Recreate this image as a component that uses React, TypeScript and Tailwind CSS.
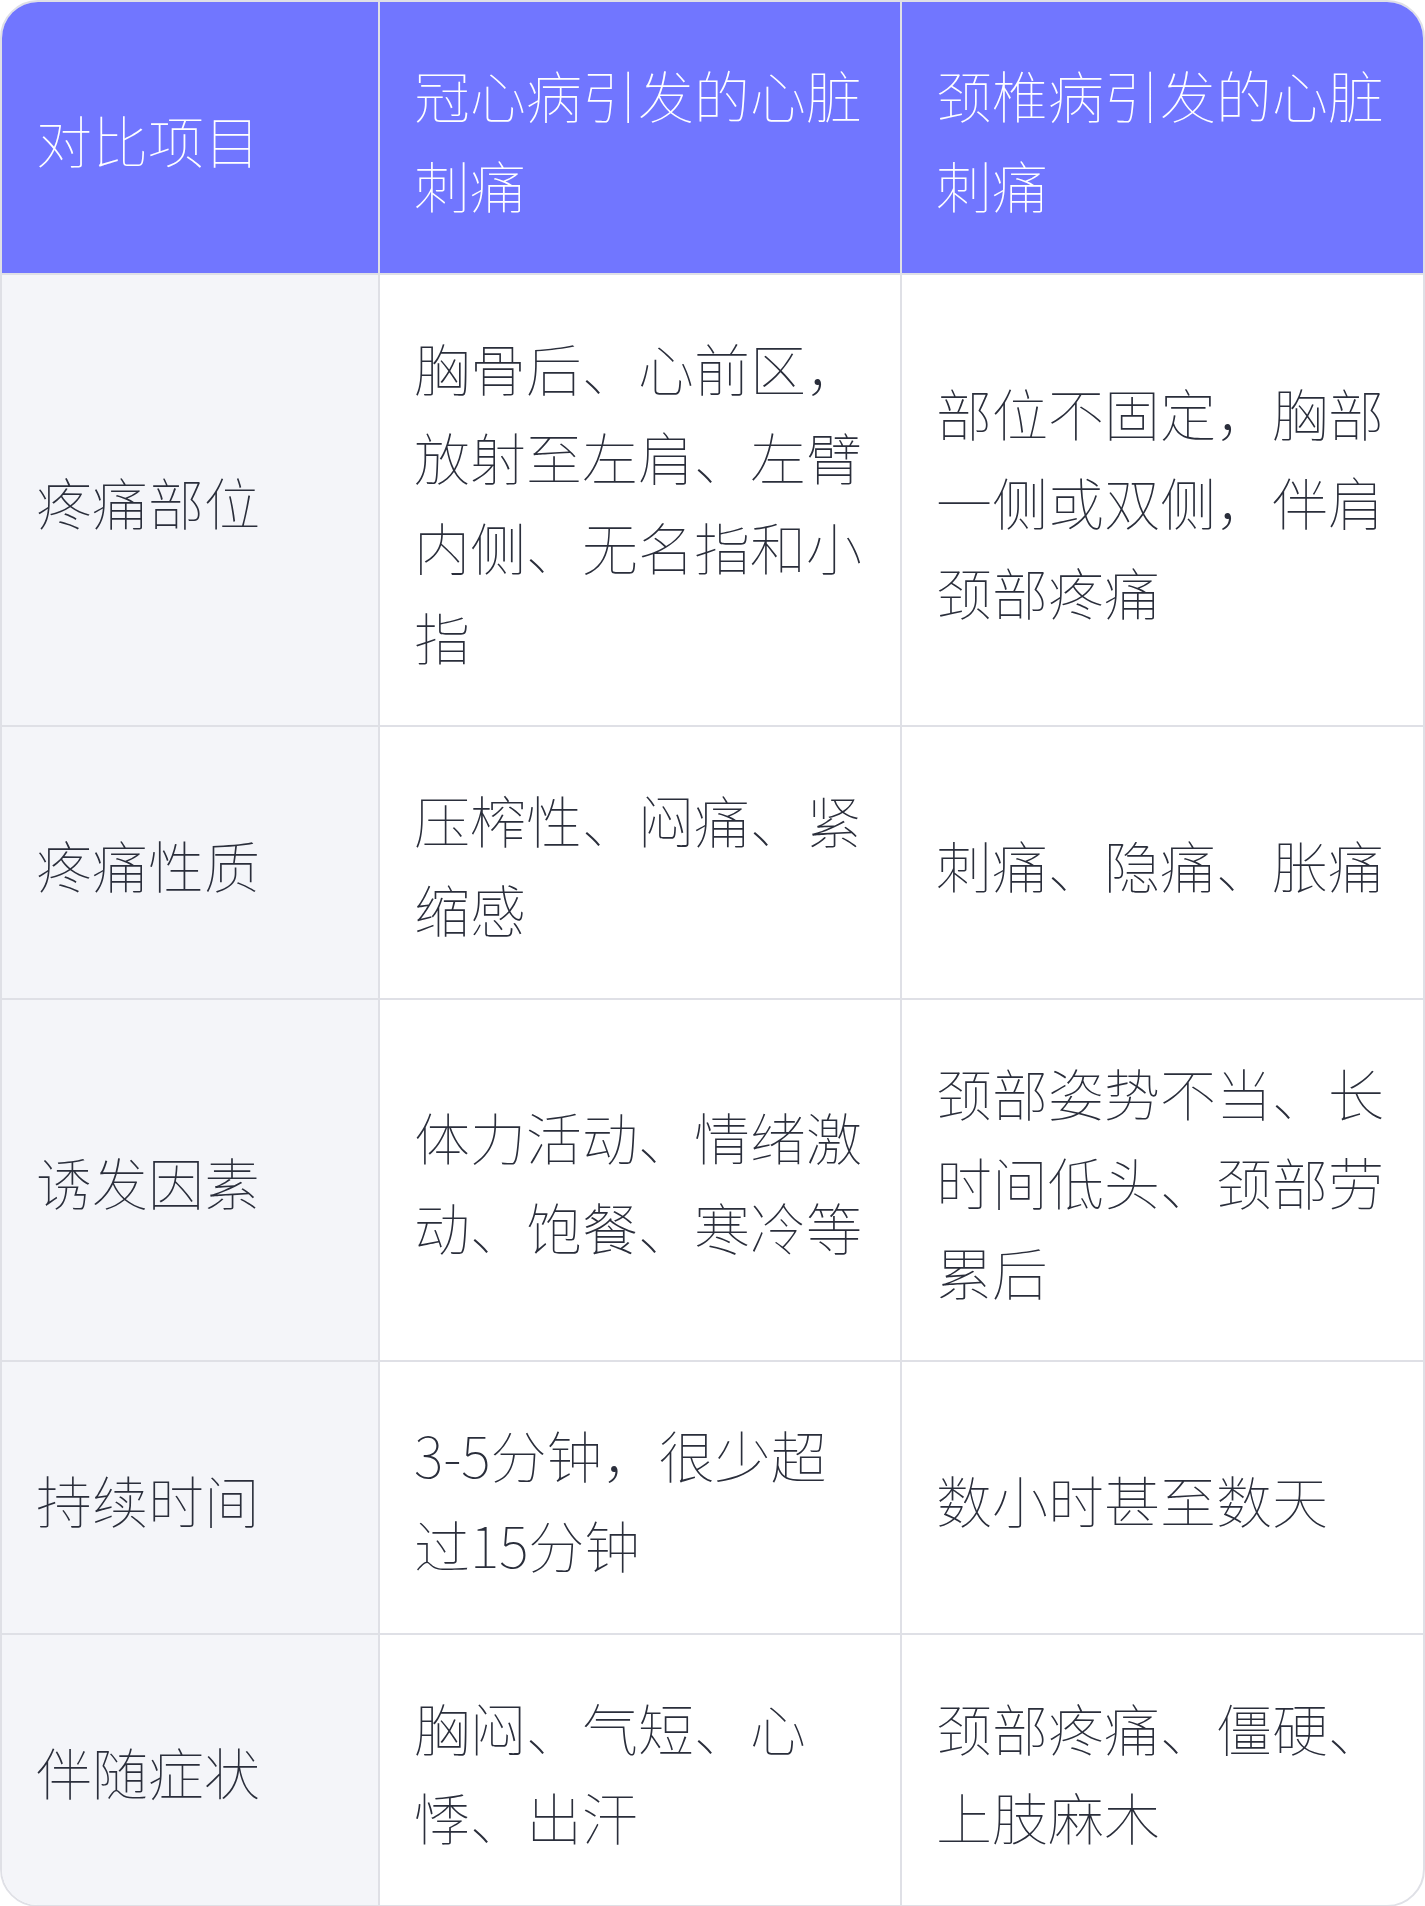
import React from 'react';

type Row = { item: string; chd: string; cervical: string };

const rows: Row[] = [
  {
    item: '疼痛部位',
    chd: '胸骨后、心前区，放射至左肩、左臂内侧、无名指和小指',
    cervical: '部位不固定，胸部一侧或双侧，伴肩颈部疼痛',
  },
  {
    item: '疼痛性质',
    chd: '压榨性、闷痛、紧缩感',
    cervical: '刺痛、隐痛、胀痛',
  },
  {
    item: '诱发因素',
    chd: '体力活动、情绪激动、饱餐、寒冷等',
    cervical: '颈部姿势不当、长时间低头、颈部劳累后',
  },
  {
    item: '持续时间',
    chd: '3-5分钟，很少超过15分钟',
    cervical: '数小时甚至数天',
  },
  {
    item: '伴随症状',
    chd: '胸闷、气短、心悸、出汗',
    cervical: '颈部疼痛、僵硬、上肢麻木',
  },
];

const cell =
  'px-[34px] pt-[47px] pb-[44.6px] align-middle text-left border-b-2 border-r-2 border-[#dfe0e6] last:border-r-0';

export default function App() {
  return (
    <div className="min-h-screen bg-white">
      <div
        className="overflow-hidden rounded-[38px] border-2 border-[#dfe0e6] bg-white text-[56px] leading-[1.6] font-thin text-[#2a2e3b]"
        style={{ fontFamily: '"Noto Sans CJK SC", "Noto Sans", sans-serif' }}
      >
        <table className="w-full table-fixed border-collapse">
          <colgroup>
            <col className="w-[377px]" />
            <col className="w-[522px]" />
            <col />
          </colgroup>
          <thead>
            <tr className="bg-[#7176ff] text-white">
              <th className={`${cell} font-thin`}>对比项目</th>
              <th className={`${cell} font-thin`}>冠心病引发的心脏刺痛</th>
              <th className={`${cell} font-thin`}>颈椎病引发的心脏刺痛</th>
            </tr>
          </thead>
          <tbody>
            {rows.map((r, i) => (
              <tr key={r.item} className={i === rows.length - 1 ? '[&>td]:border-b-0' : ''}>
                <td className={`${cell} bg-[#f4f5f9]`}>{r.item}</td>
                <td className={cell}>{r.chd}</td>
                <td className={cell}>{r.cervical}</td>
              </tr>
            ))}
          </tbody>
        </table>
      </div>
    </div>
  );
}
